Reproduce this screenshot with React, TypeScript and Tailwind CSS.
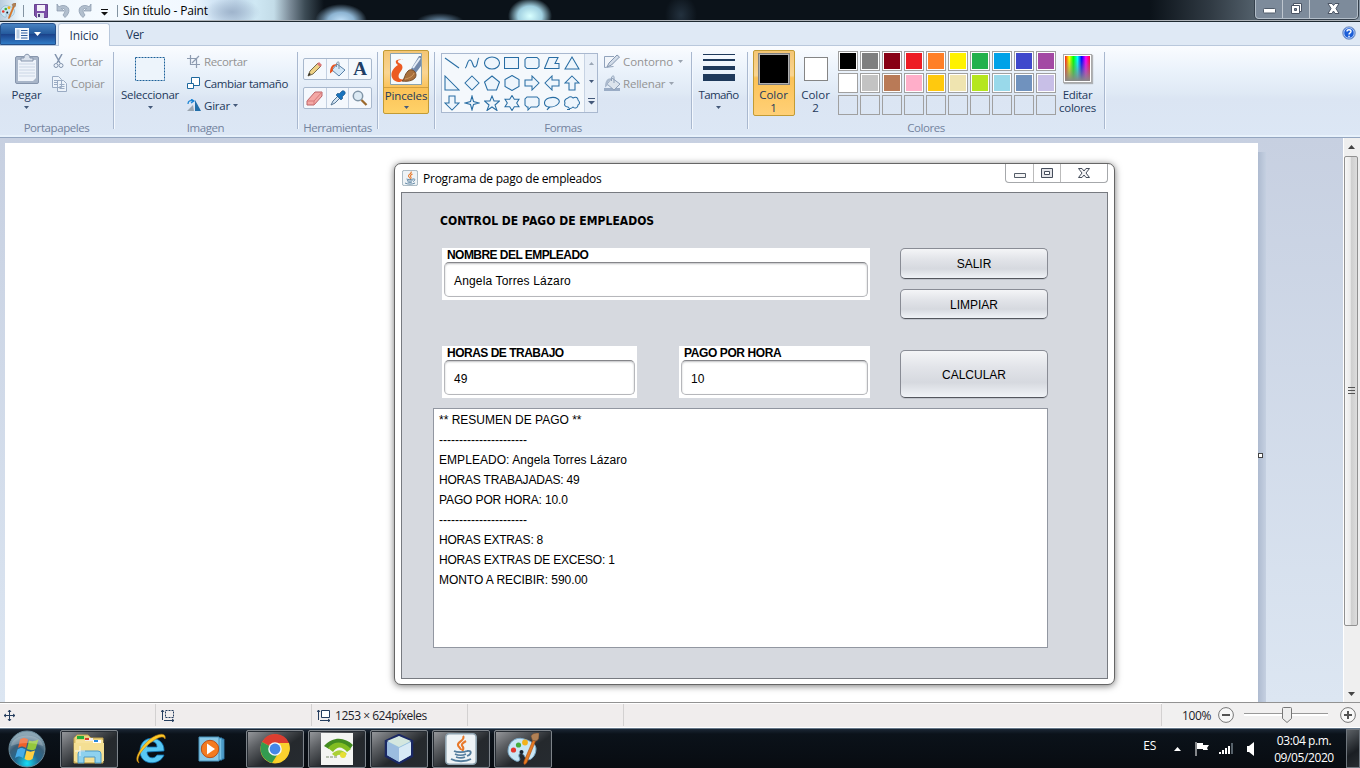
import React from 'react';

type IconProps = { w: number; h: number; children: React.ReactNode; className?: string };

function Icon({ w, h, children, className = '' }: IconProps) {
  return (
    <svg width={w} height={h} viewBox={`0 0 ${w} ${h}`} fill="none" className={`block shrink-0 ${className}`}>
      {children}
    </svg>
  );
}

function Caret({ className = 'text-[#44597a]' }: { className?: string }) {
  return (
    <Icon w={5} h={3} className={className}>
      <path d="M0 0h5L2.5 3z" fill="currentColor" />
    </Icon>
  );
}

function Palette({ size }: { size: number }) {
  return (
    <svg width={size} height={size} viewBox="0 0 32 32" className="block shrink-0">
      <path d="M17 6C8 3 1 10 1 18c0 5 4 8 8 10 3 1 5-1 3-4-1-4 2-5 5-2 2 4 3 6 7 4 3-2 5-6 5-10 0-5-5-8-12-10z" fill="#c9e6f5" stroke="#7ba9c6" />
      <circle cx="6.500" cy="17" r="2.600" fill="#e2382d" />
      <circle cx="11.500" cy="12" r="2.600" fill="#45ad3d" />
      <circle cx="18" cy="9.500" r="2.900" fill="#f3b21b" />
      <circle cx="14.500" cy="19" r="2" fill="#16222d" />
      <path d="M26 7l2.500 1-8 20c-1 3-3 4-3.500 3s0-3 1-5z" fill="#e77b22" stroke="#a44b12" strokeWidth=".6" />
      <path d="M25.500 7.500L24 3c2-3 5-3 8-3 0 4 0 7-3 8z" fill="#b18155" stroke="#7f5635" strokeWidth=".6" />
    </svg>
  );
}

function JavaCup({ size }: { size: number }) {
  return (
    <svg width={size} height={size} viewBox="0 0 32 32" className="block shrink-0">
      <rect x=".8" y=".8" width="30.400" height="30.400" rx="3.500" fill="#eef3f6" stroke="#8fa3b0" strokeWidth="1.600" />
      <path d="M18 3c3 4-6 6-5 9 0 2 3 3 3 5M21 8c-5 3-5 4-3 6 1 2 0 3-1 4" stroke="#e8792b" strokeWidth="2.100" fill="none" />
      <path d="M9 18c3 1.500 10 1.500 13 0M10 21c3 1.500 8 1.500 11 0M11 24c3 1 7 1 9 0M6 26c5 3 15 3 20 0M22 18c5-1 5 3 0 5" stroke="#547d9d" strokeWidth="1.800" fill="none" />
    </svg>
  );
}

function TitleBar() {
  return (
    <header className="flex h-[22px] items-start overflow-hidden border-b border-[#1e2930] bg-[radial-gradient(ellipse_26px_17px_at_341px_21px,#c2e2fa_0%,#8db4d2_50%,transparent_100%),radial-gradient(ellipse_24px_9px_at_440px_22px,#7da4c4_0%,transparent_100%),radial-gradient(ellipse_22px_18px_at_530px_16px,#d8ffff_0%,#a0cfe0_55%,transparent_100%),radial-gradient(ellipse_16px_20px_at_681px_15px,#23313e_0%,transparent_100%),radial-gradient(ellipse_28px_14px_at_232px_12px,#9fb4cc_0%,transparent_100%),linear-gradient(90deg,#b9cdde_0px,#eef7fd_20px,#f5faff_100px,#f1f8ff_190px,#d3e6f6_213px,#c2d8ea_236px,#cfe8f4_255px,#c3dce8_274px,#7b8b98_290px,#3c4b55_305px,#0b1219_324px,#0b1219_1150px,#303a43_1210px,#667581_1280px,#8796a5_1360px)]">
      <div className="flex h-[21px] w-full items-center border-b border-[#aeb3b9] pt-px">
        <Palette size={16} />
        <span className="ml-[7px] h-3 w-px bg-[#8393a1]" />
        <Icon w={14} h={14} className="ml-[10px]">
          <path d="M.5.5h13v13h-11l-2-2z" fill="#7c50a8" stroke="#67418f" />
          <path d="M3 1h8v6H3z" fill="#f3f1f9" />
          <path d="M3 9h7v5H3z" fill="#dee3ec" />
          <path d="M4 10h2v3H4z" fill="#49417b" />
        </Icon>
        <Icon w={14} h={15} className="ml-[8px]">
          <path d="M1 1v7h7L5.500 5.500c3-1 5 2 1.500 6.500l2 2.500c6-5 5-12-2-12-2 0-3 .5-4 1.500z" fill="#b2bfce" stroke="#8696aa" strokeWidth=".7" />
        </Icon>
        <Icon w={14} h={15} className="ml-[8px]">
          <path d="M13 1v7H6l2.500-2.500c-3-1-5 2-1.500 6.500l-2 2.500C-1 9.500 0 2.500 7 2.500c2 0 3 .5 4 1.500z" fill="#b2bfce" stroke="#8696aa" strokeWidth=".7" />
        </Icon>
        <Icon w={7} h={7} className="ml-[9px] mt-[3px]"><path d="M0 0h7v1H0zM0 3h7L3.500 6.500z" fill="#111" /></Icon>
        <span className="ml-[9px] h-3 w-px bg-[#8393a1]" />
        <span className="ml-[5px] text-[12px] leading-5 tracking-[-0.17px] text-black">Sin título - Paint</span>
        <div className="-mt-px ml-auto mr-[2px] flex h-[19px] w-[103px] self-start rounded-b border border-t-0 border-[#b2bdc8] bg-[#7d8b9b] shadow-[0_0_0_1px_#35404c]">
          <div className="flex w-[27px] items-center justify-center border-r border-[#bec6cf]">
            <Icon w={13} h={6} className="mt-[3px]"><rect x=".5" y=".5" width="12" height="4.500" rx=".8" fill="#fff" stroke="#505c6b" /></Icon>
          </div>
          <div className="flex w-[27px] items-center justify-center border-r border-[#bec6cf]">
            <Icon w={13} h={13} className="-mt-[2px]"><path d="M3.500 1.500h8v8h-8z" fill="#fff" stroke="#4b5565" /><path d="M1.500 3.500h8v8h-8z" fill="#fff" stroke="#4b5565" /><path d="M4.500 6.500h2v2h-2z" fill="#8190a1" stroke="#4b5565" /></Icon>
          </div>
          <div className="flex flex-1 items-center justify-center">
            <Icon w={13} h={11} className="-mt-[2px]"><path d="M1 .5h4L6.500 2.500 8 .5h4L9 5.500l3 5H8L6.500 8 5 10.500H1l3-5z" fill="#fff" stroke="#4b5565" /></Icon>
          </div>
        </div>
      </div>
    </header>
  );
}

function TabRow() {
  return (
    <nav className="flex h-6 border-b border-[#b9c8dc] bg-[#dfe9f5]">
      <div className="flex h-[22px] w-14 items-center gap-[5px] self-end rounded-t-[3px] border border-[#244f8a] bg-[linear-gradient(#4781c0_0%,#255b9e_48%,#1c438b_52%,#307bc6_100%)] pl-[14px]">
        <Icon w={14} h={12}><path d="M0 0h14v12H0z" fill="#f4f8fd" /><path d="M1.500 1.500h3v9h-3z" fill="#b7cbe2" /><path d="M6 2.500h6.500M6 5h6.500M6 7.500h6.500M6 10h6.500" stroke="#315f9f" /></Icon>
        <Icon w={7} h={4}><path d="M0 0h7L3.500 4z" fill="#fff" /></Icon>
      </div>
      <div className="z-10 ml-[2px] mt-[1px] flex h-[23px] w-[52px] items-center justify-center rounded-t-[3px] border border-b-0 border-[#b9c8dc] bg-[#fafcff] pt-px text-[12px] tracking-[-0.15px] text-[#1e395b]">Inicio</div>
      <div className="ml-4 flex items-center pt-[3px] text-[12px] tracking-[-0.4px] text-[#1e395b]">Ver</div>
      <div className="ml-auto mr-1 flex items-center">
        <Icon w={14} h={14} className="-mt-px">
          <circle cx="7" cy="7" r="6.300" fill="#1c5ed7" stroke="#8aa0c6" />
          <circle cx="7" cy="7" r="5.200" stroke="#eaf2ff" strokeWidth=".7" />
          <path d="M5 5.500c0-2.300 4-2.300 4 0C9 7 7 6.800 7 8.500M7 9.700v1.500" stroke="#fff" strokeWidth="1.400" />
        </Icon>
      </div>
    </nav>
  );
}

function Group({ label, className, children }: { label: string; className: string; children: React.ReactNode }) {
  return (
    <section className={`flex h-[91px] shrink-0 flex-col pt-[6px] ${className}`}>
      <div className="flex h-[77px] flex-col border-r border-[#a9b8cf] shadow-[1px_0_0_#f3f8fe]">
        <div className="flex h-[68px] shrink-0">{children}</div>
        <div className="flex h-[15px] shrink-0 items-center justify-center tracking-[-0.42px] text-[#73839e]">{label}</div>
      </div>
    </section>
  );
}

function ToolTile({ children }: { children: React.ReactNode }) {
  return <div className="flex flex-1 items-center justify-center border-r border-[#c3d0e1] last:border-r-0">{children}</div>;
}

const shapePaths = [
  'M1 3l14 10',
  'M1 13c2 0 2-8 5-8s2 7 5 7 2-8 4-9',
  'M.5 8a7.500 6 0 1 0 15 0a7.500 6 0 1 0-15 0z',
  'M.5 2.500h14v11H.5z',
  'M3 2.500h10l2 2v7l-2 2H3l-2-2v-7z',
  'M5 2.500h9l-3 6h4v5H.5z',
  'M8 2l7 12H1z',
  'M1 1v14h14z',
  'M8 1l7 7-7 7-7-7z',
  'M8 1l7.500 6-3 8h-9l-3-8z',
  'M8 .5l7 4v7l-7 4-7-4v-7z',
  'M1 5h7V1l7 7-7 7v-4H1z',
  'M15 5H8V1L1 8l7 7v-4h7z',
  'M8 1l7 7h-4v7H5V8H1z',
  'M5 1h6v7h4l-7 7-7-7h4z',
  'M8 1l1.500 5.500L15 8l-5.500 1.500L8 15 6.500 9.500 1 8l5.500-1.500z',
  'M8 1l2 5h5.500l-4.500 4 2 5.500-5-3.500-5 3.500L5 10 .5 6H6z',
  'M8 .5l2.300 3.800H15L12.700 8l2.300 3.700h-4.700L8 15.500l-2.300-3.800H1L3.300 8 1 4.300h4.700z',
  'M3 2h10l2 2v6l-2 2H7l-3 3v-3H3l-2-2V4z',
  'M5 12C-1 11-1 5 5 3c7-2 13 2 9 6-2 2-5 3-8 3l-3 3z',
  'M4 3c2-2 4-1 5 0 3-2 5 0 5 2 2 2 2 4 0 5 0 3-3 4-5 2-2 2-4 2-5 0-3 0-4-2-3-4-1-2 0-4 3-5zM3 14.500h3',
];

const palette = [
  'bg-[#000000]', 'bg-[#7f7f7f]', 'bg-[#880015]', 'bg-[#ed1c24]', 'bg-[#ff7f27]', 'bg-[#fff200]', 'bg-[#22b14c]', 'bg-[#00a2e8]', 'bg-[#3f48cc]', 'bg-[#a349a4]',
  'bg-[#ffffff]', 'bg-[#c3c3c3]', 'bg-[#b97a57]', 'bg-[#ffaec9]', 'bg-[#ffc90e]', 'bg-[#efe4b0]', 'bg-[#b5e61d]', 'bg-[#99d9ea]', 'bg-[#7092be]', 'bg-[#c8bfe7]',
];

function BucketIcon({ muted = false }: { muted?: boolean }) {
  return (
    <Icon w={17} h={17}>
      {muted && <path d="M0 13h16v3H0z" fill="#9aacc5" />}
      <path d="M8 3l8 6-6 6-7-6z" fill={muted ? '#dce4ed' : '#d4e8f8'} stroke={muted ? '#8d9fb7' : '#587fa6'} />
      <path d="M10 8V2c0-2-2.500-1-2.500 1v3" stroke={muted ? '#8d9fb7' : '#7890a6'} />
      <path d="M8 3.500C4 2.500 1 5 1 12.500L4 10C3 7 5 5 8 3.500z" fill={muted ? '#aab9cd' : '#e75420'} />
    </Icon>
  );
}

function Ribbon() {
  return (
    <div className="flex h-[92px] border-b border-[#94a6c0] bg-[linear-gradient(#fafcff_0%,#eaf2fb_28%,#dfe9f5_52%,#dbe5f3_58%,#dce7f5_100%)] text-[11.5px] text-[#1e395b] shadow-[inset_0_-2px_0_#e7f1fb]">
      <Group label="Portapapeles" className="w-[114px]">
        <div className="flex w-[53px] flex-col items-center">
          <Icon w={26} h={32} className="mt-[1px]">
            <rect x="1.500" y="3.500" width="23" height="27" rx="1.500" fill="#a8b5c8" stroke="#8796ad" />
            <path d="M4 7h18v18l-3 3H4z" fill="#eef3fa" />
            <path d="M5 11h16M5 14h16M5 17h16M5 20h16M5 23h16" stroke="#cbd6e5" />
            <path d="M7 5h3c0-5 6-5 6 0h3v3H7z" fill="#d9e1ec" stroke="#8796ad" />
          </Icon>
          <span className="mt-[2px] leading-4 tracking-[-0.1px]">Pegar</span>
          <Caret className="mt-[3px] text-[#44597a]" />
        </div>
        <div className="-ml-px flex flex-col text-[#939393]">
          <div className="flex h-[19px] items-center gap-[6px] pl-[1px]">
            <Icon w={11} h={15}><path d="M2 0l5 9M9 0L4 9" stroke="#8293ac" strokeWidth="1.500" /><circle cx="3" cy="11.500" r="2" stroke="#8293ac" /><circle cx="8" cy="11.500" r="2" stroke="#8293ac" /></Icon>
            <span className="tracking-[-0.2px]">Cortar</span>
          </div>
          <div className="mt-[3px] flex h-[19px] items-center gap-[4px]">
            <Icon w={15} h={16}><path d="M.5.5h6l3 3v8h-9zM5.500 4.500h6l3 3v8h-9z" fill="#edf3fa" stroke="#9aabc3" /><path d="M2 4.500h4M2 6.500h3M2 8.500h3M7.500 8.500h5M7.500 10.500h5M7.500 12.500h5" stroke="#9aabc3" /></Icon>
            <span className="tracking-[-0.3px]">Copiar</span>
          </div>
        </div>
      </Group>

      <Group label="Imagen" className="w-[184px]">
        <div className="ml-1 flex w-16 flex-col items-center">
          <Icon w={30} h={24} className="mt-[5px]"><path d="M.5.500h29v23H.5z" stroke="#1c6099" strokeDasharray="2 1" fill="#edf4fb" /></Icon>
          <span className="mt-[6px] leading-4 tracking-[-0.28px]">Seleccionar</span>
          <Caret className="mt-[3px] text-[#44597a]" />
        </div>
        <div className="ml-[5px] flex flex-col gap-[3px]">
          <div className="flex h-[19px] items-center gap-[4px] text-[#939393]">
            <Icon w={13} h={13}><path d="M3.500 0v9.500H13M0 3.500h9.500V13M5 8l7-7" stroke="#8d9bb0" strokeWidth="1.200" /></Icon>
            <span className="tracking-[-0.35px]">Recortar</span>
          </div>
          <div className="flex h-[19px] items-center gap-[4px]">
            <Icon w={13} h={13}><path d="M4.500.5h8v8h-8z" fill="#fff" stroke="#1d689e" /><path d="M.5 6.500h6v5h-6z" fill="#fff" stroke="#1d689e" /></Icon>
            <span className="tracking-[-0.42px]">Cambiar tamaño</span>
          </div>
          <div className="flex h-[19px] items-center gap-[3px]">
            <Icon w={14} h={13}><path d="M7 12H0l6-6z" fill="#9aa5b0" /><path d="M8 1v11h6z" fill="#216ea9" /><path d="M1 5c0-3 2-4 5-3M4 0l3 2-3 2" stroke="#1682d4" strokeWidth="1.200" /></Icon>
            <span className="tracking-[-0.2px]">Girar</span>
            <Caret className="text-[#44597a]" />
          </div>
        </div>
      </Group>

      <Group label="Herramientas" className="w-20">
        <div className="ml-[5px] mt-[6px] flex flex-col gap-[7px]">
          <div className="flex h-[22px] w-[69px] rounded-[2px] border border-[#a8b8cd] bg-[#f4f8fd]">
            <ToolTile><Icon w={16} h={16}><path d="M1 15l2-5 8-8 3 3-8 8z" fill="#eed185" stroke="#675d42" strokeWidth=".9" /><path d="M1 15l1-3 2 1z" fill="#222" /><path d="M12 1l3 3-2 2-3-3z" fill="#dc7978" /></Icon></ToolTile>
            <ToolTile><BucketIcon /></ToolTile>
            <ToolTile><span className="font-['Liberation_Serif',serif] text-[19px] font-bold leading-[18px] text-[#203d65]">A</span></ToolTile>
          </div>
          <div className="flex h-[22px] w-[69px] rounded-[2px] border border-[#a8b8cd] bg-[#f4f8fd]">
            <ToolTile><Icon w={17} h={15}><path d="M1 10l8-9h7v4l-8 9H1z" fill="#f4a8a5" stroke="#bb6469" /><path d="M1 10h7l8-9M8 10v4" stroke="#d77a7b" /></Icon></ToolTile>
            <ToolTile><Icon w={16} h={16}><path d="M1 15l2-4 5-5 2 2-5 5z" fill="#d6e6f4" stroke="#557796" /><path d="M9 4l3-3c2-1 4 1 3 3l-3 3 1 1-2 2-5-5 2-2z" fill="#1973bd" stroke="#174f83" strokeWidth=".6" /></Icon></ToolTile>
            <ToolTile><Icon w={16} h={16}><circle cx="6" cy="6" r="4.700" fill="#dceaf4" stroke="#8095a7" strokeWidth="1.500" /><path d="M9.500 10l5 5" stroke="#9b692d" strokeWidth="2.300" /></Icon></ToolTile>
          </div>
        </div>
      </Group>

      <Group label="" className="w-[57px]">
        <div className="-mt-[2px] ml-[5px] flex h-16 w-[46px] shrink-0 flex-col items-center rounded-[2px] border border-[#c29b35] bg-[linear-gradient(#f4c675_0%,#fad591_35%,#fbc257_60%,#ffd269_100%)]">
          <div className="flex h-[37px] w-full items-start justify-center border-b border-[#d4a03e] pt-[2px]">
            <Icon w={32} h={32}>
              <path d="M.5.5h31v31H.5z" fill="#f4f9fb" stroke="#8ba3ae" />
              <path d="M14 7C5 5 4 9 8 12-2 18 0 29 10 29l7-3c-8 2-11-2-6-8 3-4 1-7-2-8-3-2 0-4 5-3z" fill="#ec5b22" />
              <path d="M21 16l8-13h2v10l-6 8z" fill="#7289aa" /><path d="M23 15l7-10" stroke="#e4edf7" strokeWidth="2" />
              <path d="M12 28c3-2 2-6 6-10 3-3 8 0 8 4 0 5-7 7-14 6z" fill="#a8703c" stroke="#774c28" /><path d="M15 26c5-1 8-3 9-6" stroke="#d29a61" />
            </Icon>
          </div>
          <span className="leading-4 tracking-[-0.15px]">Pinceles</span>
          <Caret className="mt-[2px] text-[#44597a]" />
        </div>
      </Group>

      <Group label="Formas" className="w-[257px]">
        <div className="ml-[6px] mt-[1px] flex h-[60px] w-[157px] border border-[#a9b8cf] bg-[#f4f8fc]">
          <div className="-mt-px grid w-[142px] grid-cols-[repeat(7,20px)] grid-rows-[repeat(3,20px)] place-items-center">
            {shapePaths.map((d, i) => <Icon key={i} w={16} h={16}><path d={d} fill="#edf5fc" stroke="#286da3" strokeWidth="1.050" /></Icon>)}
          </div>
          <div className="flex flex-1 flex-col items-center justify-around border-l border-[#c7d3e3] bg-[#e8eff8]">
            <Icon w={5} h={3}><path d="M0 3h5L2.500 0z" fill="#9ba7b6" /></Icon>
            <Caret />
            <Icon w={7} h={7}><path d="M0 0h7v1H0zM0 3h7L3.500 6.500z" fill="#44597a" /></Icon>
          </div>
        </div>
        <div className="ml-[6px] flex flex-col gap-[3px] text-[#939393]">
          <div className="flex h-[19px] items-center gap-[3px]">
            <Icon w={16} h={15}><path d="M10 2.500H.5v11l9-1" fill="#f1f5fa" stroke="#91a3bc" /><path d="M3 13l2-4 8-8 2.500 2-8 8z" fill="#d2dce9" stroke="#8496af" /></Icon>
            <span className="tracking-[-0.1px]">Contorno</span><Caret className="ml-[2px] text-[#9ba4b0]" />
          </div>
          <div className="flex h-[19px] items-center gap-[2px]"><BucketIcon muted /><span className="tracking-[-0.2px]">Rellenar</span><Caret className="ml-[2px] text-[#9ba4b0]" /></div>
        </div>
      </Group>

      <Group label="" className="w-14">
        <div className="flex w-[53px] flex-col items-center">
          <Icon w={32} h={29} className="mt-[2px]"><path d="M0 0h32v1H0zM0 5h32v2H0zM0 12h32v4H0zM0 20h32v7H0z" fill="#1e395b" /></Icon>
          <span className="mt-[4px] leading-4 tracking-[-0.6px]">Tamaño</span>
          <Caret className="mt-[3px] text-[#44597a]" />
        </div>
      </Group>

      <Group label="Colores" className="w-[357px]">
        <div className="-mt-[2px] ml-[5px] flex h-[66px] w-[42px] shrink-0 flex-col items-center rounded-[2px] border border-[#c29b35] bg-[linear-gradient(#f4c675_0%,#fad591_38%,#fbc257_42%,#ffd077_100%)] pr-px pt-[2px]">
          <div className="h-8 w-8 border border-[#7f7f7f] bg-[#b0b0b0] p-px"><div className="h-full w-full bg-black" /></div>
          <span className="mt-[3px] text-center leading-[13px]">Color<br />1</span>
        </div>
        <div className="flex w-[42px] shrink-0 flex-col items-center pt-[5px]">
          <div className="h-6 w-6 border border-[#858585] bg-white" />
          <span className="-ml-px mt-[7px] text-center leading-[13px]">Color<br />2</span>
        </div>
        <div className="-mt-px ml-px grid h-[64px] grid-cols-10 gap-x-[2px] gap-y-[2px]">
          {palette.map((c) => <div key={c} className="h-5 w-5 border border-[#a0a0a0] bg-white p-px"><div className={`h-full w-full ${c}`} /></div>)}
          {Array.from({ length: 10 }, (_, i) => <div key={i} className="h-5 w-5 border border-[#a0a0a0]" />)}
        </div>
        <div className="flex w-[43px] flex-col items-center pt-[2px]">
          <div className="h-[29px] w-[29px] border border-[#aaa] bg-white p-px shadow-[1px_1px_1px_#8889]">
            <div className="h-full w-full bg-[linear-gradient(transparent_10%,#888_100%),linear-gradient(90deg,#f31818,#ff0,#0f0,#0ff,#00f,#f0f,#f03)]" />
          </div>
          <span className="mt-[5px] text-center leading-[13px] tracking-[-0.3px]">Editar<br />colores</span>
        </div>
      </Group>
    </div>
  );
}

function Field({ label, value, className }: { label: string; value: string; className: string }) {
  return (
    <div className={`flex h-[52px] flex-col bg-white px-[2px] ${className}`}>
      <div className="h-[14px] whitespace-nowrap pl-[3px] text-[12px] font-bold leading-[14px]">{label}</div>
      <div className="flex h-[35px] items-center rounded-[5px] border border-[#b6b7bb] border-t-[#85868a] pl-[9px] pt-[3px] text-[12px] tracking-[0.15px] shadow-[inset_0_1px_2px_#bfc0c3]">{value}</div>
    </div>
  );
}

function SwingButton({ label, className }: { label: string; className: string }) {
  return (
    <button className={`w-[148px] rounded-[5px] border border-[#898c95] border-b-[#54575e] bg-[linear-gradient(#f4f5f7_0%,#e2e4e9_35%,#d6d9df_68%,#f0f3f7_100%)] text-[12px] shadow-[0_1px_0_#bfc3cb] ${className}`}>{label}</button>
  );
}

const summary = [
  { text: '** RESUMEN DE PAGO **', tracking: 'tracking-normal' },
  { text: '----------------------', tracking: 'tracking-normal' },
  { text: 'EMPLEADO: Angela Torres Lázaro', tracking: 'tracking-[0.05px]' },
  { text: 'HORAS TRABAJADAS: 49', tracking: 'tracking-[-0.2px]' },
  { text: 'PAGO POR HORA: 10.0', tracking: 'tracking-[-0.12px]' },
  { text: '----------------------', tracking: 'tracking-normal' },
  { text: 'HORAS EXTRAS: 8', tracking: 'tracking-[-0.22px]' },
  { text: 'HORAS EXTRAS DE EXCESO: 1', tracking: 'tracking-[-0.2px]' },
  { text: 'MONTO A RECIBIR: 590.00', tracking: 'tracking-[-0.05px]' },
];

function PayrollWindow() {
  return (
    <div className="ml-[389px] mt-5 flex h-[522px] w-[721px] flex-col rounded-[7px] border border-[#666] bg-white pl-[6px] shadow-[0_1px_7px_#777] [font-family:'Liberation_Sans',Arial,sans-serif]">
      <div className="flex h-7 shrink-0 items-center">
        <div className="ml-px"><JavaCup size={16} /></div>
        <span className="ml-[5px] mt-px [font-family:'Open_Sans',sans-serif] text-[12px] tracking-[-0.24px]">Programa de pago de empleados</span>
        <div className="ml-auto mr-[6px] flex h-[19px] w-[103px] self-start rounded-b-[4px] border border-t-0 border-[#a6a8ab]">
          <div className="flex w-7 items-center justify-center border-r border-[#bbb]"><Icon w={12} h={5} className="mt-1"><path d="M.5.5h11v4H.5z" fill="#f4f4f5" stroke="#555d68" /></Icon></div>
          <div className="flex w-[27px] items-center justify-center border-r border-[#bbb]"><Icon w={12} h={10}><path d="M.5.500h11v9H.5z" fill="#e4e5e9" stroke="#454d5b" /><path d="M3.500 3.500h5v3h-5z" fill="#fff" stroke="#454d5b" /></Icon></div>
          <div className="flex flex-1 items-center justify-center"><Icon w={12} h={10}><path d="M.5.5h3.500L6 3 8 .500h3.500L8 5l3.500 4.500H8L6 7 4 9.500H.5L4 5z" fill="#f4f4f5" stroke="#454d5b" /></Icon></div>
        </div>
      </div>
      <div className="h-[487px] w-[707px] border border-[#777a80] bg-[#d6d9df]">
        <h1 className="h-[55px] pl-[38px] [font-family:'DejaVu_Sans_Condensed','Noto_Sans',sans-serif] text-[12px] font-bold leading-[57px] tracking-[0.03px]">CONTROL DE PAGO DE EMPLEADOS</h1>
        <div className="flex h-[150px] gap-[30px] pl-10">
          <div className="flex w-[428px] flex-col justify-between">
            <Field label="NOMBRE DEL EMPLEADO" value="Angela Torres Lázaro" className="w-full [&>div:first-child]:tracking-[-0.55px]" />
            <div className="flex justify-between">
              <Field label="HORAS DE TRABAJO" value="49" className="w-[195px] [&>div:first-child]:tracking-[-0.5px]" />
              <Field label="PAGO POR HORA" value="10" className="w-[191px] [&>div:first-child]:tracking-[-0.4px]" />
            </div>
          </div>
          <div className="flex flex-col">
            <SwingButton label="SALIR" className="h-[31px]" />
            <SwingButton label="LIMPIAR" className="mt-[10px] h-[30px] pt-[2px]" />
            <SwingButton label="CALCULAR" className="mt-[31px] h-12 pt-[2px]" />
          </div>
        </div>
        <div className="ml-[31px] mt-[10px] h-[240px] w-[615px] border border-[#9297a1] bg-white pl-[5px] pt-px text-[12px] leading-5">
          {summary.map((line, i) => <div key={i} className={`whitespace-pre ${line.tracking}`}>{line.text}</div>)}
        </div>
      </div>
    </div>
  );
}

function Workspace() {
  return (
    <main className="flex h-[564px] bg-[linear-gradient(#c7d0e1,#dce6f2)]">
      <div className="relative ml-[5px] mt-[5px] h-[559px] w-[1253px] shrink-0 bg-white">
        <PayrollWindow />
        <span className="absolute -right-[5px] top-[310px] z-10 h-[5px] w-[5px] border border-[#444] bg-white" />
      </div>
      <div className="mt-[14px] w-2 bg-[linear-gradient(90deg,#aebbd0,#c5d0e1)]" />
      <div className="ml-auto flex w-[17px] flex-col items-center border-l border-white bg-[#efefef] pr-[2px]">
        <div className="flex h-[18px] items-center"><Icon w={7} h={4}><path d="M0 4h7L3.500 0z" fill="#444" /></Icon></div>
        <div className="flex h-[470px] w-[14px] items-center justify-center rounded-[2px] border border-[#919191] bg-[linear-gradient(90deg,#f7f7f7_0%,#eaeaea_45%,#cecece_50%,#ddd_100%)]">
          <Icon w={7} h={8}><path d="M0 .5h7M0 3.500h7M0 6.500h7" stroke="#555" /></Icon>
        </div>
        <div className="mt-auto flex h-[17px] items-center"><Icon w={7} h={4}><path d="M0 0h7L3.500 4z" fill="#444" /></Icon></div>
      </div>
    </main>
  );
}

function StatusBar() {
  return (
    <footer className="flex h-[26px] items-center border-b border-t border-b-white border-t-[#929292] bg-[#f0eded] text-[12px] text-[#1c1c28] shadow-[inset_0_1px_0_#fff]">
      <div className="flex h-[22px] w-[156px] items-center border-r border-[#d3d1d1] pl-1"><Icon w={11} h={11}><path d="M5.500 0v11M0 5.500h11M4 2l1.500-2L7 2M4 9l1.500 2L7 9M2 4L0 5.500 2 7M9 4l2 1.500L9 7" stroke="#243d5e" /></Icon></div>
      <div className="flex h-[22px] w-[156px] items-center border-r border-[#d3d1d1] pl-[5px]"><Icon w={14} h={13}><path d="M1.500 11V1M0 3l1.500-2L3 3M3 11.500h10M11 10l2 1.500-2 1.500" stroke="#243d5e" /><path d="M4.500 1.500h8v7h-8z" stroke="#243d5e" strokeDasharray="2 1" /></Icon></div>
      <div className="flex h-[22px] w-[156px] items-center border-r border-[#d3d1d1] pl-[5px]"><Icon w={14} h={13}><path d="M1.500 11V1M0 3l1.500-2L3 3M3 11.500h10M11 10l2 1.500-2 1.500" stroke="#243d5e" /><path d="M4.500 1.500h8v7h-8z" fill="#fff" stroke="#243d5e" /></Icon><span className="ml-1 pt-[2px] tracking-[-0.48px]">1253 × 624píxeles</span></div>
      <div className="h-[22px] w-[156px] border-r border-[#d3d1d1]" />
      <div className="h-[22px] w-[538px] border-r border-[#d3d1d1]" />
      <div className="flex h-[24px] flex-1 items-center bg-[#f1f0f0] pl-5">
        <span className="w-[30px] pt-[2px] tracking-[-0.4px]">100%</span>
        <Icon w={16} h={16} className="ml-[6px]"><circle cx="8" cy="8" r="7.400" fill="#f8f8f8" stroke="#777" /><path d="M4 8h8" stroke="#555" strokeWidth="2" /></Icon>
        <div className="ml-[10px] flex h-[18px] w-[84px] items-center bg-[linear-gradient(transparent_7px,#999_7px,#999_8px,#fff_8px,#fff_10px,transparent_10px)]"><Icon w={10} h={16} className="ml-[38px]"><path d="M.5 1.500q0-1 1-1h7q1 0 1 1v10L5 15.500.5 11.500z" fill="#eee" stroke="#777" /></Icon></div>
        <Icon w={16} h={16} className="ml-3"><circle cx="8" cy="8" r="7.400" fill="#f8f8f8" stroke="#777" /><path d="M4 8h8M8 4v8" stroke="#555" strokeWidth="2" /></Icon>
      </div>
    </footer>
  );
}

function TaskButton({ children, className = '' }: { children: React.ReactNode; className?: string }) {
  return <div className={`flex h-[38px] w-[58px] items-center justify-center rounded-[2px] border border-[#7d8389] bg-[linear-gradient(145deg,#9a9ca0_0%,#5c5f63_28%,#25292d_58%,#262b30_100%)] shadow-[inset_0_0_0_1px_#262c33] ${className}`}>{children}</div>;
}

function Taskbar() {
  return (
    <footer className="flex h-10 items-center border-t border-[#66788a] bg-[linear-gradient(#1b2735_0px,#0b121a_5px,#080c11_100%)] text-white">
      <svg width="38" height="38" viewBox="0 0 38 38" className="ml-2 block">
        <defs>
          <radialGradient id="startOrb" cx=".5" cy=".9" r=".8"><stop stopColor="#14dff8" /><stop offset=".4" stopColor="#246a91" /><stop offset=".7" stopColor="#3b5f78" /><stop offset="1" stopColor="#8ca6b4" /></radialGradient>
        </defs>
        <circle cx="19" cy="19" r="18" fill="url(#startOrb)" stroke="#6b8b9b" />
        <path d="M12 9.500c3-2 5-2 8 0l-2 8.500c-3-2-5-2-8 0z" fill="#ef602a" /><path d="M21 10.500c3 1 5 1 9.500-1l-3 9.500c-3 2-5 1-8.500 0z" fill="#94c83d" /><path d="M9.500 19.500c3-2 5-2 8 0l-2.500 8.500c-3-2-5-2-8 0z" fill="#45acea" /><path d="M18.500 20.500c3 1.500 5 1.500 8.500 0l-2.500 8.500c-3 2-5 1.500-8 0z" fill="#ffd042" />
        <path d="M3 16C5 2 33 2 35 16 25 12 13 12 3 16z" fill="#fff" opacity=".22" />
      </svg>
      <TaskButton className="ml-[14px]">
        <Icon w={34} h={30}><path d="M2 4L5 1h11l3 3h12v25H2z" fill="#ead27f" stroke="#bea04c" /><path d="M4 6h27v22H4z" fill="#f7e39c" /><path d="M5 2h7v3H5z" fill="#23ad38" /><path d="M13 4h8v3h-8z" fill="#f3efeb" /><path d="M13 4h4v2h-4z" fill="#d83b2c" /><path d="M21 6h8v3h-8z" fill="#fff" /><path d="M22 6h4v2h-4z" fill="#2889dc" /><path d="M2 9h30v18H2z" fill="#f4df93" /><path d="M6 29V20q0-3 3-3h17q3 0 3 3v9h-6v-6H12v6z" fill="#8ed1ee" stroke="#4f99c4" /><path d="M8 12v10M3 17h10" stroke="#fff" opacity=".8" /></Icon>
      </TaskButton>
      <Icon w={32} h={32} className="ml-[17px]">
        <path d="M29 18c1-16-24-18-24 0 0 15 20 15 24 4h-7c-3 5-10 3-10-3zM12 14c1-7 10-7 10 0z" fill="#58c8f4" stroke="#0f75b6" strokeWidth=".8" fillRule="evenodd" /><path d="M4 30C-2 27 5 15 14 7 22 0 32-1 30 6c-1-3-5-3-12 2C9 14 3 22 3 27c0 1 1 2 1 3z" fill="#fec927" stroke="#bb7c11" strokeWidth=".6" />
      </Icon>
      <Icon w={28} h={28} className="ml-[31px]"><path d="M10 4h16v20H10z" fill="#68b5dc" stroke="#2b6f9c" /><path d="M4 3h20v22H4z" fill="#7ac2e4" stroke="#2e81b3" /><path d="M1 2h20v24H1z" fill="#8ac9e7" stroke="#4792bb" /><circle cx="12" cy="14" r="8.700" fill="#f47b20" stroke="#b95018" /><path d="M9 8.500l8 5.500-8 5.500z" fill="#fff" /></Icon>
      <TaskButton className="ml-5">
        <Icon w={30} h={30}><circle cx="15" cy="15" r="14.500" fill="#f8cc22" /><path d="M15 15L2 8A15 15 0 0 1 29 9H15z" fill="#dc3e31" /><path d="M15 15L2 8a15 15 0 0 0 10 21l7-11z" fill="#339b50" /><path d="M15 9h14a15 15 0 0 1-14 20l5-11z" fill="#fad12e" /><circle cx="15" cy="15" r="6.800" fill="#f4f7fb" /><circle cx="15" cy="15" r="5.400" fill="#4487e8" /></Icon>
      </TaskButton>
      <TaskButton className="ml-1">
        <Icon w={32} h={32}><path d="M0 0h32v32H0z" fill="#f4f5f3" /><path d="M3 13C12 3 24 4 32 12l-3 4C20 8 13 8 8 16z" fill="#438c20" /><path d="M7 15c7-8 16-7 23 1l-4 3c-5-6-10-6-14 0z" fill="#82bd21" /><path d="M11 21c5-5 10-5 15 0l-4 3c-3-3-5-3-7 0z" fill="#aad036" /><circle cx="22" cy="22" r="3" fill="#e7df35" /><path d="M5 24h12" stroke="#b8c1b0" strokeWidth="2" strokeDasharray="3 1" /></Icon>
      </TaskButton>
      <TaskButton className="ml-1"><Icon w={30} h={30}><path d="M15 1l13 6v15l-13 7-13-7V7z" fill="#99c2df" stroke="#1a2864" strokeWidth="2.500" /><path d="M3 7l12-5 12 5-12 6z" fill="#d4e7df" /><path d="M3 8l12 6v14L3 21z" fill="#9bbcdf" /><path d="M27 8l-12 6v14l12-7z" fill="#d8eaf6" /></Icon></TaskButton>
      <TaskButton className="ml-1"><JavaCup size={32} /></TaskButton>
      <TaskButton className="ml-1"><Palette size={32} /></TaskButton>
      <div className="ml-auto flex h-full items-center [font-family:'Open_Sans',sans-serif]">
        <span className="mb-[5px] mr-px text-[12px] tracking-[-0.3px]">ES</span>
        <Icon w={7} h={4} className="ml-[17px]"><path d="M0 4h7L3.500 0z" fill="#fff" /></Icon>
        <Icon w={14} h={14} className="ml-[14px]"><path d="M1 0v14" stroke="#fff" /><path d="M2 1h6v2h6l-2 3 1 2H8V7H2z" fill="#fff" /></Icon>
        <Icon w={14} h={11} className="ml-[10px]"><path d="M0 9h2v2H0zM3 7h2v4H3zM6 5h2v6H6zM9 3h2v8H9z" fill="#fff" /><path d="M12 0h2v11h-2z" fill="#56616a" /></Icon>
        <Icon w={7} h={14} className="ml-[14px]"><path d="M0 4h2l5-4v14l-5-4H0z" fill="#fff" /></Icon>
        <div className="ml-[20px] w-[60px] whitespace-nowrap pt-px text-center text-[12px] leading-[17px] tracking-[-0.4px]">03:04 p.m.<br />09/05/2020</div>
        <div className="ml-3 h-full w-[14px] border border-[#6f767d] bg-[linear-gradient(145deg,#5c6166,#1a1e23_60%,#292d31)]" />
      </div>
    </footer>
  );
}

export default function App() {
  return (
    <div className="flex h-[768px] w-[1360px] flex-col overflow-hidden bg-[#dce6f2] [font-family:'Open_Sans','Noto_Sans',sans-serif] text-black">
      <TitleBar />
      <TabRow />
      <Ribbon />
      <Workspace />
      <StatusBar />
      <Taskbar />
    </div>
  );
}
